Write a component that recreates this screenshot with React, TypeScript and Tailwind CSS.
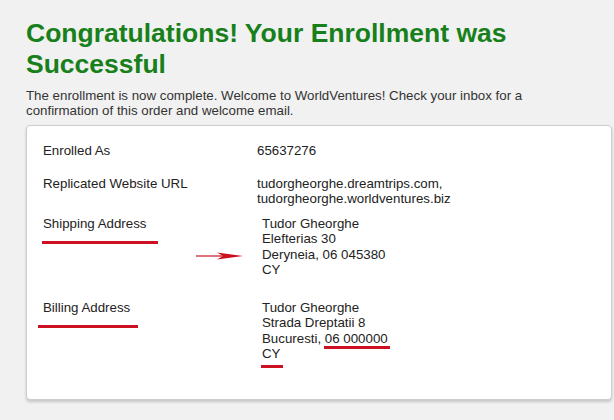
export default function App() {
  const font = { fontFamily: '"Liberation Sans", Arial, sans-serif' };

  return (
    <div className="min-h-screen w-[614px] h-[420px] overflow-hidden bg-[#f1f1f1] pl-[26px] pr-[2px] pt-[18px]" style={font}>
      {/* Heading */}
      <h1 className="text-[26.5px] leading-[31px] font-bold text-[#17801a]">
        Congratulations! Your Enrollment was Successful
      </h1>

      <p className="mt-[8px] w-[550px] text-[13.3px] leading-[15px] text-[#333]">
        The enrollment is now complete. Welcome to WorldVentures! Check your inbox for a confirmation of this order and welcome email.
      </p>

      {/* Summary card */}
      <div className="relative mt-[7px] h-[275px] rounded-[4px] border border-[#cdcdcd] bg-white pl-4 pt-[17px] text-[13.3px] leading-[15.5px] text-[#222] shadow-[0_2px_3px_rgba(0,0,0,0.18)]">
        <div className="flex">
          <div className="w-[214px]">Enrolled As</div>
          <div>65637276</div>
        </div>

        <div className="mt-[17px] flex">
          <div className="w-[214px]">Replicated Website URL</div>
          <div>
            <div>tudorgheorghe.dreamtrips.com,</div>
            <div>tudorgheorghe.worldventures.biz</div>
          </div>
        </div>

        <div className="mt-[9px] flex">
          <div className="w-[214px]">
            <div>Shipping Address</div>
            <div className="-ml-px mt-[10px] h-[3px] w-[116px] bg-[#cc1122]" />
          </div>
          <div className="pl-[5px]">
            <div>Tudor Gheorghe</div>
            <div>Elefterias 30</div>
            <div>Deryneia, 06 045380</div>
            <div>CY</div>
          </div>
        </div>

        <div className="mt-[22px] flex">
          <div className="w-[214px]">
            <div>Billing Address</div>
            <div className="-ml-[5px] mt-[10px] h-[3px] w-[100px] bg-[#cc1122]" />
          </div>
          <div className="pl-[5px]">
            <div>Tudor Gheorghe</div>
            <div>Strada Dreptatii 8</div>
            <div>
              Bucuresti,{' '}
              <span className="relative">
                06 000000
                <span className="absolute -left-px -right-[2px] top-[15px] h-[3px] bg-[#cc1122]" />
              </span>
            </div>
            <div>
              <span className="relative">
                CY
                <span className="absolute -left-px -right-[3px] top-[19px] h-[3px] bg-[#cc1122]" />
              </span>
            </div>
          </div>
        </div>

        {/* Annotation arrow */}
        <svg className="absolute left-[168px] top-[125px]" width="50" height="10" viewBox="0 0 50 10">
          <line x1="1" y1="5" x2="30" y2="5" stroke="#cc1122" strokeWidth="1.2" />
          <path d="M22 1.5 L48 5 L22 8.5 L28 5 Z" fill="#cc1122" />
        </svg>
      </div>
    </div>
  );
}
